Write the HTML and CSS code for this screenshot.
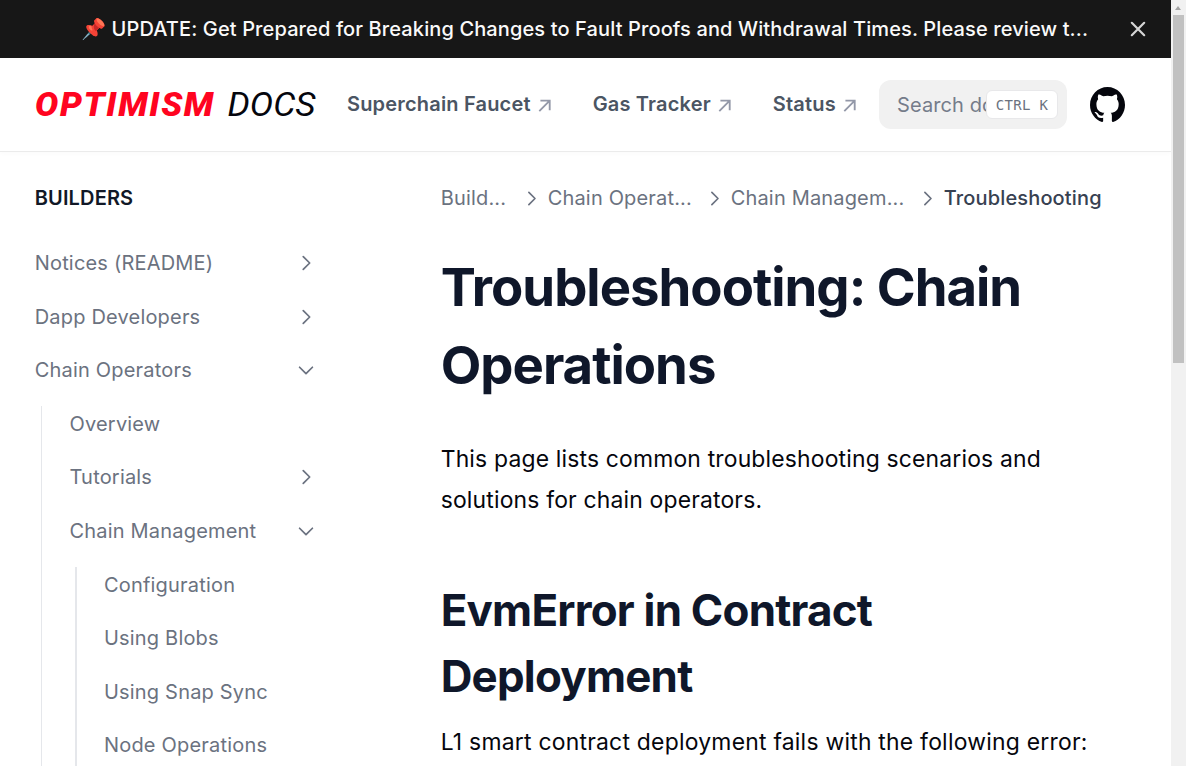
FILE: index.html
```html
<!DOCTYPE html>
<html lang="en">
<head>
<meta charset="utf-8">
<title>Troubleshooting: Chain Operations</title>
<link rel="stylesheet" href="styles.css">
</head>
<body>
<svg width="0" height="0" class="defs">
  <symbol id="chev" viewBox="0 0 24 24"><path d="M9 5l7 7-7 7" fill="none" stroke="currentColor" stroke-width="1.9" stroke-linecap="round" stroke-linejoin="round"/></symbol>
  <symbol id="ext" viewBox="0 0 14 14"><path d="M1.4 13L12.6 1.8M2.6 1.8H12.6V12" fill="none" stroke="currentColor" stroke-width="2"/></symbol>
</svg>
<div class="shell">
<div class="page">
  <div class="banner">
    <div class="banner-text"><span class="pin">📌</span> UPDATE: Get Prepared for Breaking Changes to Fault Proofs and Withdrawal Times. Please review t...</div>
    <svg class="close" viewBox="0 0 16 16"><path d="M1.8 1.8l12.4 12.4M14.2 1.8L1.8 14.2" fill="none" stroke="#d6d6d6" stroke-width="2.2" stroke-linecap="round"/></svg>
  </div>
  <header class="header">
    <svg class="logo" viewBox="0 0 284 40">
      <text class="logo-bold" x="0" y="31" textLength="180" lengthAdjust="spacingAndGlyphs">OPTIMISM</text>
      <text class="logo-thin" x="192.5" y="31" textLength="88" lengthAdjust="spacingAndGlyphs">DOCS</text>
    </svg>
    <nav class="nav">
      <a><span>Superchain Faucet</span><svg><use href="#ext"/></svg></a>
      <a><span>Gas Tracker</span><svg><use href="#ext"/></svg></a>
      <a><span>Status</span><svg><use href="#ext"/></svg></a>
    </nav>
    <div class="search"><span class="ph">Search do</span><kbd>CTRL K</kbd></div>
    <svg class="github" viewBox="3 3 18 18"><path fill="#05060d" d="M12 3C7.0275 3 3 7.12937 3 12.2276C3 16.3109 5.57625 19.7597 9.15374 20.9824C9.60374 21.0631 9.77249 20.7863 9.77249 20.5441C9.77249 20.3249 9.76125 19.5982 9.76125 18.8254C7.5 19.2522 6.915 18.2602 6.735 17.7412C6.63375 17.4759 6.19499 16.6569 5.8125 16.4378C5.4975 16.2647 5.0475 15.838 5.80124 15.8264C6.51 15.8149 7.01625 16.4954 7.18499 16.7723C7.99499 18.1679 9.28875 17.7758 9.80625 17.5335C9.885 16.9337 10.1212 16.53 10.38 16.2993C8.3775 16.0687 6.285 15.2728 6.285 11.7432C6.285 10.7397 6.63375 9.9092 7.20749 9.26326C7.1175 9.03257 6.8025 8.08674 7.2975 6.81794C7.2975 6.81794 8.05125 6.57571 9.77249 7.76377C10.4925 7.55615 11.2575 7.45234 12.0225 7.45234C12.7875 7.45234 13.5525 7.55615 14.2725 7.76377C15.9937 6.56418 16.7475 6.81794 16.7475 6.81794C17.2424 8.08674 16.9275 9.03257 16.8375 9.26326C17.4113 9.9092 17.76 10.7281 17.76 11.7432C17.76 15.2843 15.6563 16.0687 13.6537 16.2993C13.98 16.5877 14.2613 17.1414 14.2613 18.0065C14.2613 19.2407 14.25 20.2326 14.25 20.5441C14.25 20.7863 14.4188 21.0746 14.8688 20.9824C16.6554 20.364 18.2079 19.1866 19.3078 17.6162C20.4077 16.0457 20.9995 14.1611 21 12.2276C21 7.12937 16.9725 3 12 3Z"/></svg>
  </header>
  <div class="body">
    <aside class="side">
      <div class="side-title">BUILDERS</div>
      <div class="row"><span>Notices (README)</span><svg><use href="#chev"/></svg></div>
      <div class="row"><span>Dapp Developers</span><svg><use href="#chev"/></svg></div>
      <div class="row"><span>Chain Operators</span><svg class="open"><use href="#chev"/></svg></div>
      <div class="tree">
        <div class="row"><span>Overview</span></div>
        <div class="row"><span>Tutorials</span><svg><use href="#chev"/></svg></div>
        <div class="row"><span>Chain Management</span><svg class="open"><use href="#chev"/></svg></div>
        <div class="tree inner">
          <div class="row"><span>Configuration</span></div>
          <div class="row"><span>Using Blobs</span></div>
          <div class="row"><span>Using Snap Sync</span></div>
          <div class="row"><span>Node Operations</span></div>
        </div>
      </div>
    </aside>
    <main class="main">
      <div class="crumbs">
        <span class="c1">Build...</span><svg><use href="#chev"/></svg>
        <span class="c2">Chain Operat...</span><svg><use href="#chev"/></svg>
        <span class="c3">Chain Managem...</span><svg><use href="#chev"/></svg>
        <span class="current">Troubleshooting</span>
      </div>
      <h1>Troubleshooting: Chain<br>Operations</h1>
      <p class="intro">This page lists common troubleshooting scenarios and<br>solutions for chain operators.</p>
      <h2>EvmError in Contract<br>Deployment</h2>
      <p class="text">L1 smart contract deployment fails with the following error:</p>
    </main>
  </div>
</div>
<div class="scrollbar"><div class="arrow"></div><div class="thumb"></div></div>
</div>
</body>
</html>
```
FILE: styles.css
```css
* { box-sizing: border-box; }
body { margin: 0; font-family: Inter, "Liberation Sans", sans-serif; color: #05060d; background: #fff; overflow: hidden; }
.defs { display: block; }
.shell { display: grid; grid-template-columns: 1171px 15px; height: 766px; overflow: hidden; }
.page { height: 766px; overflow: hidden; }
.banner { height: 58px; background: #171717; color: #fafafa; display: flex; align-items: center; padding: 0 0 1px 81px; }
.banner-text { width: 1048px; font-size: 20px; letter-spacing: .12px; font-weight: 500; white-space: nowrap; }
.pin { font-size: 20.2px; }
.close { width: 16px; height: 16px; flex: none; margin-left: 1px; }
.header { height: 94px; display: flex; align-items: center; padding-left: 35px; border-bottom: 1px solid #ebebeb; box-shadow: 0 2px 4px rgba(0,0,0,.02); }
.logo { width: 284px; height: 40px; flex: none; overflow: visible; }
.logo-bold { font: italic 900 33.5px Roboto, sans-serif; letter-spacing: 1.6px; fill: #ff0420; }
.logo-thin { font: italic 400 34px Roboto, sans-serif; fill: #05060d; }
.nav { width: 532px; margin-left: 28px; padding-bottom: 1px; display: flex; gap: 41px; font-size: 20px; letter-spacing: .18px; font-weight: 600; color: #4b5563; white-space: nowrap; flex: none; }
.nav a { display: flex; align-items: center; }
.nav svg { width: 13px; height: 13px; margin: 2px 1px 0 7px; color: #9398a8; }
.search { width: 188px; height: 49px; border-radius: 12px; background: #f1f1f1; padding: 0 9px 0 18px; display: flex; align-items: center; flex: none; }
.ph { width: 89px; overflow: hidden; white-space: nowrap; font-size: 20px; letter-spacing: .1px; color: #757c8a; flex: none; }
kbd { width: 72px; height: 29px; border: 1px solid #e8e8ea; border-radius: 6px; background: #fff; font: 14px/28px "DejaVu Sans Mono", monospace; letter-spacing: .35px; color: #6b7280; text-align: center; flex: none; }
.github { width: 35px; height: 35px; margin-left: 23px; flex: none; }
.body { display: grid; grid-template-columns: 440.7px 1fr; }
.side { padding: 30px 0 0 34.7px; color: #6b7280; font-size: 20px; letter-spacing: .19px; }
.side-title { height: 54.3px; line-height: 33px; font-weight: 600; letter-spacing: .15px; color: #111827; }
.row { height: 53.6px; width: 282px; display: flex; align-items: center; justify-content: space-between; white-space: nowrap; }
.row svg { width: 22px; height: 22px; }
.row svg.open { transform: rotate(90deg); }
.tree { display: flow-root; margin: 9px 0 0 6.3px; padding-left: 27.5px; border-left: 1px solid #e5e7eb; }
.tree .row { width: 247.2px; }
.tree > .row:first-child { margin-top: -9px; }
.inner { margin-left: 5.5px; border-left-width: 2px; padding-left: 27px; }
.main { padding-top: 30px; }
.crumbs { height: 32px; display: flex; align-items: center; font-size: 20px; letter-spacing: .17px; color: #6b7280; white-space: nowrap; }
.crumbs svg { width: 21px; height: 21px; flex: none; margin: 0 6px 0 -3px; }
.c1 { width: 83px; } .c2 { width: 159px; } .c3 { width: 189px; }
.crumbs .current { color: #374151; font-weight: 500; letter-spacing: .15px; }
h1 { margin: 34px 0 0; font-size: 52.7px; line-height: 78px; font-weight: 700; letter-spacing: -1px; color: #0f172a; white-space: nowrap; }
p { margin: 0; font-size: 22.9px; letter-spacing: .18px; line-height: 41px; white-space: nowrap; }
.intro { margin-top: 35px; }
h2 { margin: 56px 0 0; font-size: 43.9px; line-height: 66px; font-weight: 700; letter-spacing: -.78px; color: #0f172a; white-space: nowrap; }
.text { margin-top: 13px; letter-spacing: .24px; }
.scrollbar { background: #f1f1f1; padding-left: 2px; }
.arrow { width: 0; height: 0; margin: 6px 0 0 2px; border: 3.5px solid transparent; border-top: 0; border-bottom: 4px solid #a3a3a3; }
.thumb { width: 11px; height: 348px; margin-top: 5px; background: #c1c1c1; }
```
